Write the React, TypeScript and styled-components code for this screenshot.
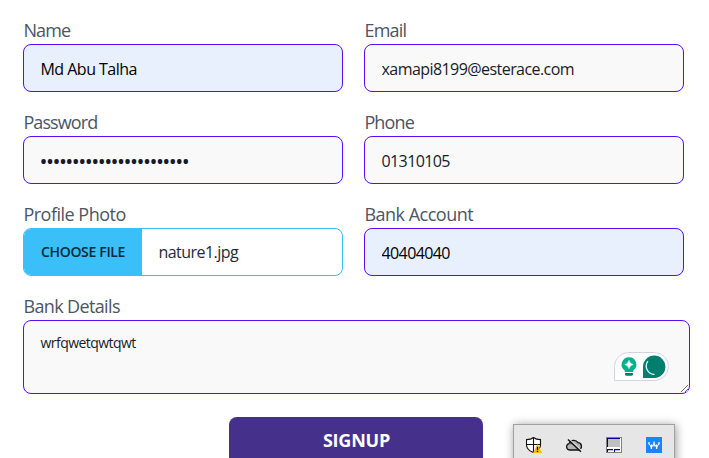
import React from "react";
import styled, { createGlobalStyle } from "styled-components";

const GlobalStyle = createGlobalStyle`
  * { box-sizing: border-box; }
  html, body, #root { height: 100%; }
  body {
    margin: 0;
    background: #fff;
    overflow: hidden;
    font-family: "Open Sans", "Noto Sans", sans-serif;
  }
`;

const Page = styled.main`
  position: relative;
  height: 458px;
  overflow: hidden;
  padding: 16px 19px 0 23px;
`;

const Form = styled.form`
  display: grid;
  grid-template-columns: 320px 320px;
  column-gap: 21px;
  row-gap: 16px;
`;

const Field = styled.div<{ $wide?: boolean }>`
  display: flex;
  flex-direction: column;
  grid-column: ${(p) => (p.$wide ? "1 / -1" : "auto")};
  width: ${(p) => (p.$wide ? "667px" : "320px")};
`;

const Label = styled.label<{ $track: number }>`
  height: 28px;
  padding-left: 0.4px;
  line-height: 29px;
  font-size: 18px;
  color: #4b5563;
  white-space: nowrap;
  letter-spacing: ${(p) => p.$track}px;
`;

const Input = styled.input<{ $filled?: boolean; $track: number }>`
  width: 100%;
  height: 48px;
  padding: 1px 16px 0 16.5px;
  border: 1px solid #570df8;
  border-radius: 8px;
  outline: none;
  background: ${(p) => (p.$filled ? "#e8f0fe" : "#f9f9f9")};
  color: ${(p) => (p.$filled ? "#000" : "#181a2a")};
  font-family: inherit;
  font-size: 16px;
  letter-spacing: ${(p) => p.$track}px;

  &[type="password"] {
    font-weight: 700;
  }
`;

const FilePicker = styled.div`
  display: flex;
  height: 48px;
  border: 1px solid #3abff8;
  border-radius: 8px;
  overflow: hidden;
  background: #fff;
`;

const FileButton = styled.span`
  width: 118px;
  padding-left: 17px;
  background: #3abff8;
  color: #002b3d;
  font-size: 14px;
  font-weight: 600;
  line-height: 46px;
  letter-spacing: -0.33px;
  white-space: nowrap;
`;

const FileName = styled.span`
  padding-left: 16.5px;
  font-size: 16px;
  line-height: 46px;
  letter-spacing: -0.55px;
  color: #1f2937;
`;

const DetailsBox = styled.div`
  position: relative;
  height: 74px;
`;

const TextArea = styled.textarea`
  display: block;
  width: 100%;
  height: 74px;
  padding: 12px 16px 8px 16.5px;
  border: 1px solid #570df8;
  border-radius: 8px;
  outline: none;
  resize: both;
  background: #f9f9f9;
  color: #181a2a;
  font-family: inherit;
  font-size: 14px;
  line-height: 20px;
  letter-spacing: -0.55px;
`;

const AssistantBadge = styled.div`
  position: absolute;
  left: 591px;
  top: 32px;
  width: 55px;
  height: 29px;
`;

const Signup = styled.button`
  display: block;
  width: 254px;
  height: 48px;
  margin: 23px 0 0 206px;
  padding: 0 0 0 1px;
  border: 0;
  border-radius: 8px;
  background: #45318b;
  color: #fff;
  font-family: inherit;
  font-size: 18px;
  font-weight: 700;
  line-height: 46px;
  padding-bottom: 2px;
  letter-spacing: -0.2px;
`;

const Tray = styled.aside`
  position: absolute;
  left: 513px;
  top: 424px;
  width: 162px;
  height: 60px;
  display: flex;
  gap: 24px;
  padding: 12px 0 0 12px;
  border: 1px solid #a0a0a0;
  background: #e6e6e6;
  box-shadow: 1px 1px 9px rgba(0, 0, 0, 0.4);
`;

const TrayIcon = styled.svg`
  width: 16px;
  height: 16px;
  flex: none;
`;

const AssistantIcons = () => (
  <svg width="55" height="29" viewBox="0 0 55 29">
    <path d="M.5 28.5V14.5A14 14 0 0 1 14.5.5h26a14 14 0 0 1 0 28z" fill="#fff" stroke="#d0d4e2" />
    <path d="M15 5.2a7.4 7.4 0 0 0-4.3 13.4v1.5h8.6v-1.5A7.4 7.4 0 0 0 15 5.2z" fill="#03b28c" />
    <path d="M11 21h8v1.2q0 1.5-1.8 1.5h-4.4q-1.8 0-1.8-1.5z" fill="#027e6f" />
    <path d="M15 8.3q.8 3.4 4.2 4.2-3.4.8-4.2 4.2-.8-3.4-4.2-4.2 3.4-.8 4.2-4.2z" fill="#fff" stroke="#fff" strokeWidth=".5" />
    <path d="M29 26V14.5A11.2 11.2 0 1 1 40.5 26z" fill="#027e6f" />
    <path d="M33.7 9.5a8.3 8.3 0 0 0 6.2 12.9" fill="none" stroke="#d9fff5" strokeWidth="1.3" strokeLinecap="round" />
  </svg>
);

const ShieldIcon = () => (
  <TrayIcon viewBox="0 0 16 16">
    <path d="M7.5.5Q10 2.6 14.5 2.6V8q0 4.8-7 7.6-7-2.8-7-7.6V2.6Q5 2.6 7.5.5z" fill="#fff" stroke="#111" strokeWidth="1.1" />
    <path d="M7.5 1v14M.5 7.5h14" stroke="#111" strokeWidth="1.1" />
    <path d="M11.5 7 16 16H7z" fill="#fdb913" />
    <path d="M11.5 9.7v3.2M11.5 13.8v1.2" stroke="#111" strokeWidth="1.3" />
  </TrayIcon>
);

const CloudIcon = () => (
  <TrayIcon viewBox="0 0 16 16">
    <path d="M3.6 13a3.3 3.3 0 0 1-.4-6.5 5 5 0 0 1 8.8-.8 3.7 3.7 0 0 1 .6 7.3z" fill="#b4b4b4" stroke="#111" strokeWidth="1.3" />
    <path d="M3.2 6.5q3.7-.6 6.8 3" fill="none" stroke="#555" />
    <path d="M2.7 1.7 15.7 13.7" stroke="#e6e6e6" strokeWidth="1.2" />
    <path d="M2 2.5 15 14.8" stroke="#111" strokeWidth="1.4" />
  </TrayIcon>
);

const TouchpadIcon = () => (
  <TrayIcon viewBox="0 0 16 16" shapeRendering="crispEdges">
    <path d="M0 0h16v16H0z" fill="#808080" />
    <path d="M1 1h14v14H1z" fill="#fff" />
    <path d="M1 1h13v9H1z" fill="#000080" />
    <path d="M2 2h12v8H2z" fill="#c0c0c0" />
    <path d="M14 1h1v10H1v1h14V1zM1 10h13v1H1z" fill="#fff" />
    <path d="M1 12h6v1H2v2H1zM8 12h6v1H9v2H8z" fill="#000080" />
    <path d="M2 13h5v1H2zM9 13h5v1H9z" fill="#c0c0c0" />
  </TrayIcon>
);

const WaveIcon = () => (
  <TrayIcon viewBox="0 0 16 16">
    <path d="M0 0h16v16H0z" fill="#1a83ff" />
    <path d="M3 5v2.5M5.4 7.5V12M8 4.6v5M10.6 7.5V12M13 5v2.5" fill="none" stroke="#fff" strokeWidth="1.3" />
    <path d="M3 6.5 5.4 10.5 8 6.5l2.6 4L13 6.5" fill="none" stroke="#fff" strokeWidth="1" />
  </TrayIcon>
);

export default function App() {
  return (
    <>
      <GlobalStyle />
      <Page>
        <Form onSubmit={(e) => e.preventDefault()}>
          <Field>
            <Label $track={-0.9}>Name</Label>
            <Input $filled $track={-0.52} defaultValue="Md Abu Talha" />
          </Field>
          <Field>
            <Label $track={-0.75}>Email</Label>
            <Input $track={-0.56} defaultValue="xamapi8199@esterace.com" />
          </Field>
          <Field>
            <Label $track={-0.9}>Password</Label>
            <Input $track={0.45} type="password" defaultValue="abcdefghijklmnopqrstuvw" />
          </Field>
          <Field>
            <Label $track={-0.85}>Phone</Label>
            <Input $track={-0.6} defaultValue="01310105" />
          </Field>
          <Field>
            <Label $track={-0.5}>Profile Photo</Label>
            <FilePicker>
              <FileButton>CHOOSE FILE</FileButton>
              <FileName>nature1.jpg</FileName>
            </FilePicker>
          </Field>
          <Field>
            <Label $track={-0.5}>Bank Account</Label>
            <Input $filled $track={-0.6} defaultValue="40404040" />
          </Field>
          <Field $wide>
            <Label $track={-0.63}>Bank Details</Label>
            <DetailsBox>
              <TextArea spellCheck={false} defaultValue="wrfqwetqwtqwt" />
              <AssistantBadge>
                <AssistantIcons />
              </AssistantBadge>
            </DetailsBox>
          </Field>
        </Form>
        <Signup type="button">SIGNUP</Signup>
        <Tray>
          <ShieldIcon />
          <CloudIcon />
          <TouchpadIcon />
          <WaveIcon />
        </Tray>
      </Page>
    </>
  );
}
